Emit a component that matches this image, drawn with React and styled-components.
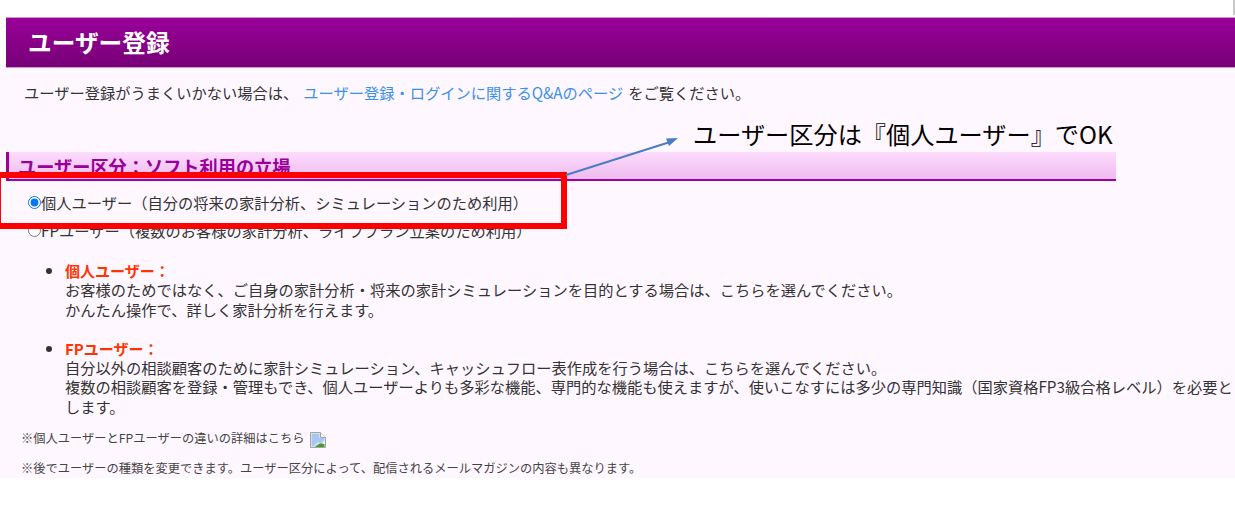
import React from "react";
import styled, { createGlobalStyle } from "styled-components";

const Global = createGlobalStyle`
  html, body { margin: 0; padding: 0; background: #fff; }
  body { font-family: "Noto Sans CJK JP", "Noto Sans", sans-serif; color: #333; overflow: hidden; }
`;
const Page = styled.div`
  position: relative;
  width: 1235px;
  height: 509px;
  padding-top: 17px;
  box-sizing: border-box;
  overflow: hidden;
`;
const Sliver = styled.div`
  position: absolute;
  top: 0;
  right: 0;
  width: 2px;
  height: 15px;
  background: #c8c8c8;
`;
const Banner = styled.h1`
  margin: 0 0 0 6px;
  height: 51px;
  box-sizing: border-box;
  border-top: 1px solid #c89cc8;
  border-bottom: 1px solid #c89cc8;
  background: linear-gradient(#990099, #770077);
  color: #fff;
  font-size: 23.7px;
  font-weight: 700;
  line-height: 48px;
  padding-left: 22px;
`;
const Content = styled.main`
  height: 410px;
  background: #fff7ff;
  padding: 14px 0 0 0;
  box-sizing: border-box;
  font-size: 15.25px;
  line-height: 20px;
`;
const Intro = styled.p`
  margin: 0 0 0 24px;
`;
const Link = styled.a`
  color: #3b8fee;
  margin: 0 5px;
`;
const SectionTitle = styled.h2`
  margin: 50px 0 0 6px;
  width: 1110px;
  height: 29px;
  box-sizing: border-box;
  border-left: 3px solid #a000a0;
  border-bottom: 2px solid #a000a0;
  background: linear-gradient(#fddcfd, #eebbee);
  color: #990099;
  font-size: 18.2px;
  font-weight: 700;
  line-height: 28px;
  padding-left: 9px;
`;
const Choices = styled.div`
  margin: 11px 0 0 28px;
  display: flex;
  flex-direction: column;
  gap: 8px;
`;
const Choice = styled.label`
  display: flex;
  align-items: center;
  height: 20px;
`;
const Radio = styled.input.attrs({ type: "radio" })`
  margin: 0;
  width: 13px;
  height: 13px;
  accent-color: #0b76f0;
`;
const Notes = styled.ul`
  margin: 21px 0 0 0;
  padding: 0 0 0 65px;
`;
const Note = styled.li`
  margin-bottom: 20px;
  line-height: 19.3px;
  &:last-child {
    margin-bottom: 14px;
  }
`;
const NoteTitle = styled.strong`
  display: block;
  color: #ff3300;
  font-weight: 700;
  font-size: 15px;
`;
const Small = styled.p`
  margin: ${(p) => p.$top}px 0 0 21px;
  font-size: 12.25px;
  line-height: 16px;
  display: flex;
  align-items: center;
  color: #444;
`;
const RedBox = styled.div`
  position: absolute;
  left: -5px;
  top: 172px;
  width: 571.5px;
  height: 56.5px;
  box-sizing: border-box;
  border: 6px solid #ff0000;
`;
const Callout = styled.div`
  position: absolute;
  left: 693px;
  top: 118px;
  color: #000;
  font-size: 24.2px;
  line-height: 32px;
  white-space: nowrap;
`;
const Arrow = styled.svg`
  position: absolute;
  left: 560px;
  top: 130px;
`;
const BrokenIcon = styled.svg`
  margin-left: 5px;
  transform: translateY(2px);
`;

export default function App() {
  return (
    <Page>
      <Global />
      <Sliver />
      <Banner>ユーザー登録</Banner>
      <Content>
        <Intro>
          ユーザー登録がうまくいかない場合は、<Link>ユーザー登録・ログインに関するQ&amp;Aのページ</Link>をご覧ください。
        </Intro>
        <SectionTitle>ユーザー区分：ソフト利用の立場</SectionTitle>
        <Choices>
          <Choice><Radio name="u" defaultChecked />個人ユーザー（自分の将来の家計分析、シミュレーションのため利用）</Choice>
          <Choice><Radio name="u" />FPユーザー（複数のお客様の家計分析、ライフプラン立案のため利用）</Choice>
        </Choices>
        <Notes>
          <Note>
            <NoteTitle>個人ユーザー：</NoteTitle>
            お客様のためではなく、ご自身の家計分析・将来の家計シミュレーションを目的とする場合は、こちらを選んでください。<br />
            かんたん操作で、詳しく家計分析を行えます。
          </Note>
          <Note>
            <NoteTitle>FPユーザー：</NoteTitle>
            自分以外の相談顧客のために家計シミュレーション、キャッシュフロー表作成を行う場合は、こちらを選んでください。<br />
            複数の相談顧客を登録・管理もでき、個人ユーザーよりも多彩な機能、専門的な機能も使えますが、使いこなすには多少の専門知識（国家資格FP3級合格レベル）を必要とします。
          </Note>
        </Notes>
        <Small $top={0}>
          ※個人ユーザーとFPユーザーの違いの詳細はこちら
          <BrokenIcon width="16" height="16" viewBox="0 0 16 16">
            <path d="M0.5 0.5H10.5L15.5 5.5V15.5H0.5Z" fill="#f2f6fc" stroke="#a4a4a4" />
            <path d="M1.5 1.5H9.5V6H14.5V9L9 14.5H1.5Z" fill="#a9c6ee" />
            <path d="M10.5 0.5V5.5H15.5" fill="#fff" stroke="#a4a4a4" />
            <path d="M3 14.5L8 10L10 11L14.5 8V9Z" fill="#dfeafa" />
            <path d="M5 15L10 11.5L14.5 12V15Z" fill="#4c9a2a" />
          </BrokenIcon>
        </Small>
        <Small $top={14}>※後でユーザーの種類を変更できます。ユーザー区分によって、配信されるメールマガジンの内容も異なります。</Small>
      </Content>
      <RedBox />
      <Arrow width="125" height="50" viewBox="0 0 125 50">
        <line x1="6" y1="45" x2="110" y2="12" stroke="#4a7ec4" strokeWidth="2" />
        <path d="M118 8L106 8.5L109 16Z" fill="#4a7ec4" />
      </Arrow>
      <Callout>ユーザー区分は『個人ユーザー』でOK</Callout>
    </Page>
  );
}
